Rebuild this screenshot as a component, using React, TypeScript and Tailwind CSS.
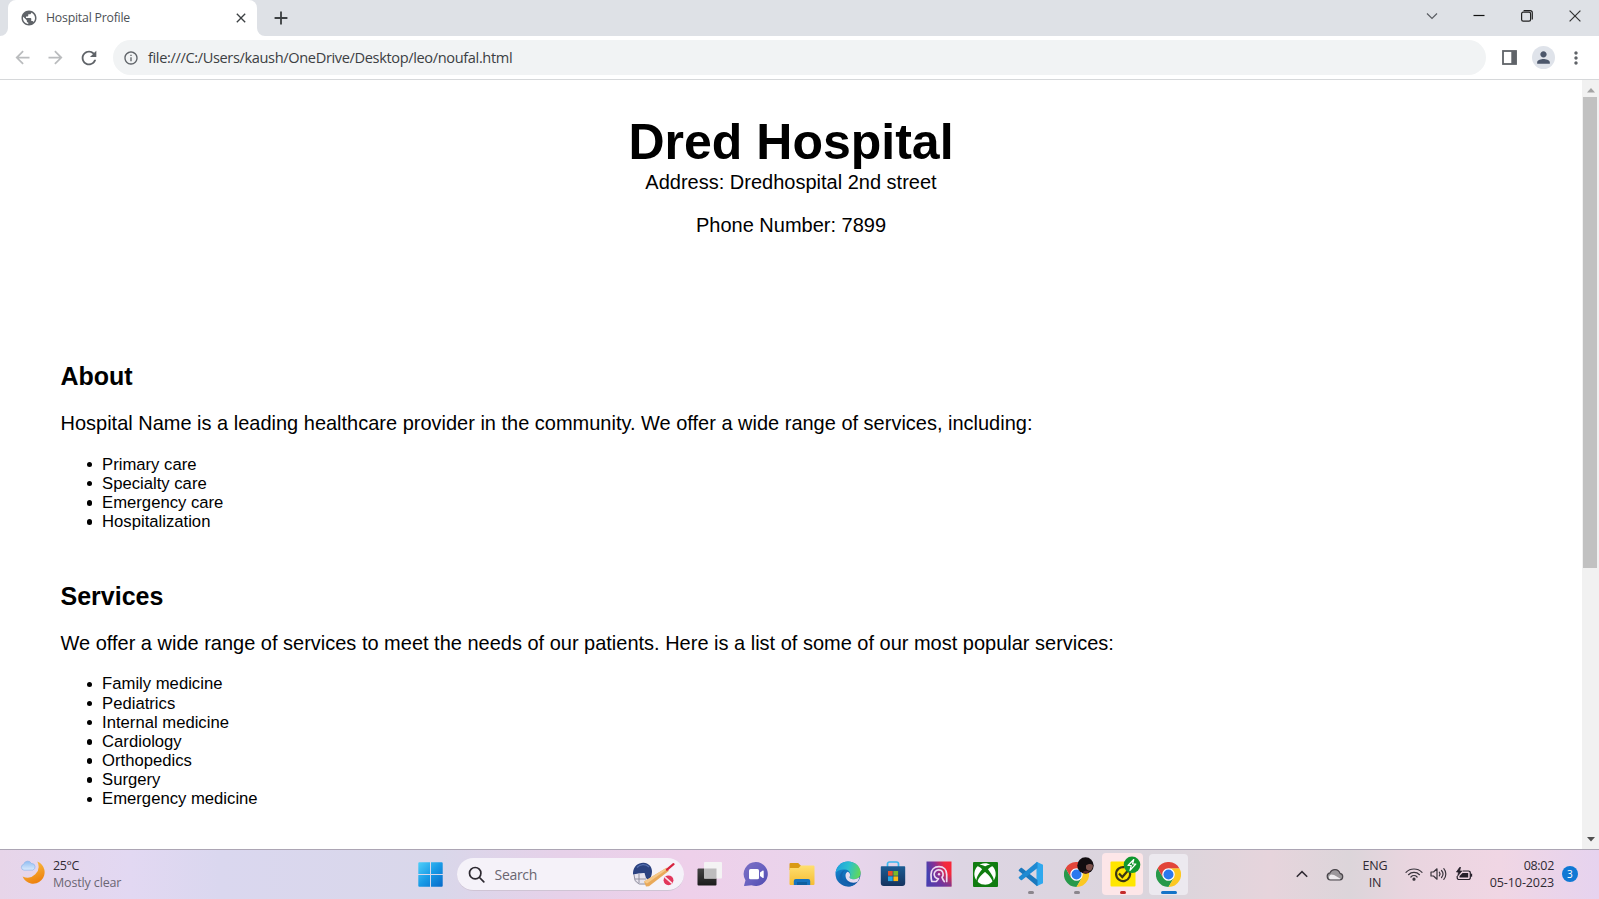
import React from 'react';
import {
  MdAdd,
  MdArrowBack,
  MdArrowForward,
  MdClose,
  MdInfoOutline,
  MdMoreVert,
  MdPerson,
  MdPublic,
  MdRefresh,
} from 'react-icons/md';
import { FaXbox } from 'react-icons/fa';

const careTypes = ['Primary care', 'Specialty care', 'Emergency care', 'Hospitalization'];

const services = [
  'Family medicine',
  'Pediatrics',
  'Internal medicine',
  'Cardiology',
  'Orthopedics',
  'Surgery',
  'Emergency medicine',
];

function TabStrip() {
  return (
    <div className="flex h-9 w-full items-stretch bg-[#dee1e6]">
      <svg width="8" height="36" viewBox="0 0 8 36" className="shrink-0">
        <path d="M8 28v8H0a8 8 0 0 0 8-8z" fill="#fff" />
      </svg>
      <div className="flex w-[249px] items-center rounded-t-lg bg-white pl-[12px]">
        <MdPublic className="h-[18px] w-[18px] shrink-0 text-[#5f6368]" />
        <span className="ml-[8px] flex-1 whitespace-nowrap text-[12.3px] tracking-[-0.22px] text-[#4d5156]">
          Hospital Profile
        </span>
        <MdClose className="mr-[8px] h-4 w-4 text-[#3c4043]" />
      </div>
      <svg width="8" height="36" viewBox="0 0 8 36" className="shrink-0">
        <path d="M0 28v8h8a8 8 0 0 1-8-8z" fill="#fff" />
      </svg>
      <div className="flex w-8 items-center justify-center">
        <MdAdd className="h-[22px] w-[22px] text-[#3c4043]" />
      </div>
      <div className="ml-auto flex h-8 items-center">
        <div className="flex w-[47px] justify-center">
          <svg width="12" height="12" viewBox="0 0 12 12" fill="none" stroke="#5a5d62" strokeWidth="1.2">
            <path d="M1 3.5l5 5 5-5" />
          </svg>
        </div>
        <div className="flex w-[48px] justify-center">
          <svg width="12" height="12" viewBox="0 0 12 12" stroke="#111" strokeWidth="1.2">
            <path d="M0.5 5.5h11" />
          </svg>
        </div>
        <div className="flex w-[48px] justify-center">
          <svg width="12" height="12" viewBox="0 0 12 12" fill="none" stroke="#222" strokeWidth="1.2">
            <rect x="0.6" y="2.1" width="9" height="9" rx="1.6" />
            <path d="M2.6 0.7h6.6a2.1 2.1 0 0 1 2.1 2.1v6.6" />
          </svg>
        </div>
        <div className="flex w-[48px] justify-center">
          <svg width="12" height="12" viewBox="0 0 12 12" stroke="#333" strokeWidth="1.2">
            <path d="M0.6 0.6l10.8 10.8M11.4 0.6L0.6 11.4" />
          </svg>
        </div>
      </div>
    </div>
  );
}

function Toolbar() {
  return (
    <div className="flex h-11 w-full items-center border-b border-[#d6d8da] bg-white">
      <div className="flex w-[113px] items-center gap-[12px] pl-[12px]">
        <MdArrowBack className="h-[21px] w-[21px] text-[#babcbe]" />
        <MdArrowForward className="h-[21px] w-[21px] text-[#babcbe]" />
        <MdRefresh className="h-[22px] w-[22px] text-[#5f6368]" />
      </div>
      <div className="flex h-[35px] w-[1373px] items-center rounded-full bg-[#f1f3f4] pl-[10px]">
        <MdInfoOutline className="h-4 w-4 text-[#5f6368]" />
        <span className="ml-[9px] whitespace-nowrap text-[14.6px] tracking-[-0.37px] text-[#3c4043]">
          file:///C:/Users/kaush/OneDrive/Desktop/leo/noufal.html
        </span>
      </div>
      <svg width="15" height="15" viewBox="0 0 15 15" className="ml-[16px]">
        <rect x="1" y="1" width="13" height="13" fill="none" stroke="#5f6368" strokeWidth="1.8" />
        <rect x="9.3" y="1" width="5" height="13" fill="#5f6368" />
      </svg>
      <div className="ml-[15px] flex h-[23px] w-[23px] items-center justify-center rounded-full bg-[#dfe3ea]">
        <MdPerson className="h-[19px] w-[19px] text-[#4c576b]" />
      </div>
      <MdMoreVert className="ml-[11px] h-5 w-5 text-[#5f6368]" />
    </div>
  );
}

function BulletList({ items }: { items: string[] }) {
  return (
    <ul className="mt-[19.6px] pl-[26.3px] text-[16.66px] leading-[19.13px]">
      {items.map((item) => (
        <li
          key={item}
          className="flex items-center before:mr-[9.9px] before:mt-px before:h-[5.4px] before:w-[5.4px] before:rounded-full before:bg-black before:content-['']"
        >
          {item}
        </li>
      ))}
    </ul>
  );
}

function Section({ title, text, items }: { title: string; text: string; items: string[] }) {
  return (
    <section>
      <h2 className="text-[25px] font-bold leading-[29px]">{title}</h2>
      <p className="mt-[21px] whitespace-nowrap text-[19.99px] leading-[23px]">{text}</p>
      <BulletList items={items} />
    </section>
  );
}

function Page() {
  return (
    <main className="h-full flex-1 overflow-hidden bg-white font-['Liberation_Sans',Arial,sans-serif] text-black">
      <header className="flex flex-col items-center pt-[34px] text-center">
        <h1 className="text-[50px] font-bold leading-[57px]">Dred Hospital</h1>
        <p className="text-[20px] leading-[23px]">Address: Dredhospital 2nd street</p>
        <p className="mt-[20px] text-[20px] leading-[23px]">Phone Number: 7899</p>
      </header>
      <div className="flex flex-col gap-[50.8px] pl-[60.5px] pt-[125px]">
        <Section
          title="About"
          text="Hospital Name is a leading healthcare provider in the community. We offer a wide range of services, including:"
          items={careTypes}
        />
        <Section
          title="Services"
          text="We offer a wide range of services to meet the needs of our patients. Here is a list of some of our most popular services:"
          items={services}
        />
      </div>
    </main>
  );
}

function Scrollbar() {
  return (
    <div className="flex h-full w-[17px] flex-col items-center bg-[#f1f1f1]">
      <div className="flex h-[17px] items-center justify-center pt-[3px]">
        <svg width="8" height="5" viewBox="0 0 8 5">
          <path d="M4 0l4 4.5H0z" fill="#a3a3a3" />
        </svg>
      </div>
      <div className="mr-px h-[471px] w-[14px] bg-[#c1c1c1]" />
      <div className="mt-auto flex h-[20px] items-center justify-center">
        <svg width="8" height="5" viewBox="0 0 8 5">
          <path d="M4 4.5L0 0h8z" fill="#505050" />
        </svg>
      </div>
    </div>
  );
}

function WeatherIcon() {
  return (
    <svg width="25" height="25" viewBox="0 0 25 25" className="-mt-[3px]">
      <defs>
        <linearGradient id="moon" x1="0" y1="0" x2="0.4" y2="1">
          <stop offset="0" stopColor="#fcc74a" />
          <stop offset="1" stopColor="#ee8410" />
        </linearGradient>
        <linearGradient id="cloud" x1="0" y1="0" x2="0" y2="1">
          <stop offset="0" stopColor="#8fbdf2" />
          <stop offset="1" stopColor="#dcebfd" />
        </linearGradient>
      </defs>
      <path d="M17.3 1.6A11.4 11.4 0 1 1 2.6 16.4 11 11 0 0 0 17.3 1.6z" fill="url(#moon)" />
      <path
        d="M4 10.2a3 3 0 0 1-.3-5.9 4.1 4.1 0 0 1 7.7-.8 3.4 3.4 0 0 1 1.4 6.6z"
        fill="url(#cloud)"
        stroke="#8db4ea"
        strokeWidth="0.7"
      />
    </svg>
  );
}

function StartIcon() {
  return (
    <svg width="25" height="25" viewBox="0 0 25 25">
      <defs>
        <linearGradient id="start" gradientUnits="userSpaceOnUse" x1="0" y1="0" x2="25" y2="25">
          <stop offset="0" stopColor="#4fd0fa" />
          <stop offset="0.5" stopColor="#189ae6" />
          <stop offset="1" stopColor="#0668c8" />
        </linearGradient>
      </defs>
      <path
        d="M1.3 0.3H12v11.7H0.3V1.3a1 1 0 0 1 1-1zM13 0.3h10.7a1 1 0 0 1 1 1V12H13zM0.3 13H12v11.7H1.3a1 1 0 0 1-1-1zM13 13h11.7v10.7a1 1 0 0 1-1 1H13z"
        fill="url(#start)"
      />
    </svg>
  );
}

function CricketIcon() {
  return (
    <svg width="43" height="26" viewBox="0 0 43 26">
      <path d="M2 13c-1 4 0 8 4 10l6 1 5-3 2-8z" fill="#e7e4ee" />
      <path d="M2 13.5l1 6 4 3.5 7 0M3 18h11M7 13v9" fill="none" stroke="#8b8a9a" strokeWidth="0.9" />
      <path
        d="M1 11.8C1.5 5 6 1.6 11.5 1.7c5 0.2 8.8 4 8.5 9.3-0.2 3.5-1.5 6.5-3.3 8.3L14 17l-1.5-5-6 0.4-5.5 1.2z"
        fill="#2b4280"
      />
      <path d="M5 6.5c3-3.5 8.5-4 12-0.5" fill="none" stroke="#5570b0" strokeWidth="1.2" />
      <path d="M12 20.5L34.5 6.7l2.5 3L17 25.2l-3 0.3z" fill="#e9a95a" />
      <path d="M12 20.5L34.5 6.7l1 1.3L15 22.5z" fill="#f6c98a" />
      <path d="M35 8.7l6.500-5.500" stroke="#d6243f" strokeWidth="2.2" strokeLinecap="round" />
      <circle cx="36.5" cy="19.3" r="4.9" fill="#e2365b" />
      <path d="M33 16.2l7 6.2" stroke="#fbe4ea" strokeWidth="1.6" />
    </svg>
  );
}

function TaskViewIcon() {
  return (
    <svg width="26" height="26" viewBox="0 0 26 26">
      <defs>
        <linearGradient id="tv" x1="0" y1="0" x2="0" y2="1">
          <stop offset="0" stopColor="#444" />
          <stop offset="1" stopColor="#1b1b1b" />
        </linearGradient>
      </defs>
      <rect x="0.5" y="7.5" width="19" height="17" rx="1" fill="url(#tv)" />
      <rect x="7" y="1" width="18" height="16.5" rx="1" fill="#f4f3f4" />
      <rect x="7" y="7.5" width="12.5" height="10" fill="#bdbcbd" />
    </svg>
  );
}

function ChatIcon() {
  return (
    <svg width="26" height="26" viewBox="0 0 26 26">
      <defs>
        <linearGradient id="chat" x1="0" y1="0" x2="1" y2="1">
          <stop offset="0" stopColor="#7b6fc4" />
          <stop offset="0.5" stopColor="#6a62c0" />
          <stop offset="1" stopColor="#4f4bb0" />
        </linearGradient>
      </defs>
      <path
        d="M13 1a12 12 0 1 1-4.5 23.2L1.8 25c-0.7 0-0.9-0.5-0.6-1.1l1.3-4.6A12 12 0 0 1 13 1z"
        fill="url(#chat)"
      />
      <rect x="6" y="8" width="10" height="10.3" rx="1.6" fill="#fff" />
      <path d="M17 11.5l2.8-2c0.4-0.3 0.9 0 0.9 0.5v6.4c0 0.5-0.5 0.8-0.9 0.5l-2.8-2z" fill="#fff" />
    </svg>
  );
}

function FolderIcon() {
  return (
    <svg width="26" height="26" viewBox="0 0 26 26">
      <defs>
        <linearGradient id="folder" x1="0" y1="0" x2="0" y2="1">
          <stop offset="0" stopColor="#ffdf70" />
          <stop offset="1" stopColor="#f6bd33" />
        </linearGradient>
      </defs>
      <path d="M1.5 2h7.7l2.4 2.5H12V9H0.5V3a1 1 0 0 1 1-1z" fill="#d99a15" />
      <path d="M0.5 7h9l2.5-2.5h12.5a1 1 0 0 1 1 1V23a1 1 0 0 1-1 1h-23a1 1 0 0 1-1-1z" fill="url(#folder)" />
      <path d="M4.8 24v-4a2 2 0 0 1 2-2h12.4a2 2 0 0 1 2 2v4z" fill="#1673c0" />
      <path d="M8 21h10v3H8z" fill="#0f5f9f" />
    </svg>
  );
}

function EdgeIcon() {
  return (
    <svg width="26" height="26" viewBox="0 0 26 26">
      <defs>
        <linearGradient id="edgeTop" x1="0" y1="0.3" x2="1" y2="0.5">
          <stop offset="0" stopColor="#1f9ede" />
          <stop offset="0.5" stopColor="#2cc0cf" />
          <stop offset="1" stopColor="#62d858" />
        </linearGradient>
        <linearGradient id="edgeLow" x1="0" y1="0" x2="0.7" y2="1">
          <stop offset="0" stopColor="#1793dc" />
          <stop offset="1" stopColor="#0f4e9c" />
        </linearGradient>
      </defs>
      <circle cx="13" cy="13" r="12.5" fill="url(#edgeLow)" />
      <path
        d="M0.6 12C1.3 5.2 6.5 0.5 13 0.5c7.5 0 12.6 5.3 12.6 11 0 4-2.6 6.7-6.6 6.7-3.4 0-5-1.4-4.3-2.5 1.5-2.3 0.5-6.7-4.7-7.2C6 8 2 9.5 0.6 12z"
        fill="url(#edgeTop)"
      />
      <path
        d="M14.7 15.7c-0.7 1.2 0.9 2.5 4.3 2.5 2.4 0 4.3-0.9 5.5-2.4-0.3 2-1 3.6-2 5-5.5 2.5-12-0.5-12-6.3 0-1.7 0.8-3 2-3.7 2.5 0.7 3.2 3.2 2.2 4.9z"
        fill="#e6dcef"
      />
      <path
        d="M10.3 9c-3.5 2.6-4 7.2-1.5 10.5 2.5 3.3 7.5 4.5 12.8 2.5-5 5.5-13 4-16-1.500C3.2 16 5.5 10.2 10.3 9z"
        fill="#1463ae"
      />
    </svg>
  );
}

function StoreIcon() {
  return (
    <svg width="26" height="26" viewBox="0 0 26 26">
      <defs>
        <linearGradient id="store" x1="0" y1="0" x2="0" y2="1">
          <stop offset="0" stopColor="#1b5c93" />
          <stop offset="1" stopColor="#15335f" />
        </linearGradient>
      </defs>
      <path d="M7.5 6V3a2 2 0 0 1 2-2h7a2 2 0 0 1 2 2v3" fill="none" stroke="#3bb7ee" strokeWidth="1.7" />
      <path d="M0.8 6.3c0-0.6 0.4-1 1-1h22.4c0.6 0 1 0.4 1 1V22a3 3 0 0 1-3 3H3.8a3 3 0 0 1-3-3z" fill="url(#store)" />
      <rect x="8" y="10" width="4.7" height="4.7" fill="#e8502a" />
      <rect x="13.4" y="10" width="4.7" height="4.7" fill="#7cb928" />
      <rect x="8" y="15.4" width="4.7" height="4.7" fill="#26a6e6" />
      <rect x="13.4" y="15.4" width="4.7" height="4.7" fill="#fdbb13" />
    </svg>
  );
}

function ArchIcon() {
  return (
    <svg width="26" height="26" viewBox="0 0 26 26">
      <defs>
        <linearGradient id="arch" x1="0" y1="0.6" x2="1" y2="0.3">
          <stop offset="0" stopColor="#3445b8" />
          <stop offset="0.45" stopColor="#8b2f92" />
          <stop offset="0.8" stopColor="#f32a3e" />
          <stop offset="1" stopColor="#f7283a" />
        </linearGradient>
        <linearGradient id="archShade" x1="0" y1="0" x2="0" y2="1">
          <stop offset="0.5" stopColor="#5c3aa8" stopOpacity="0" />
          <stop offset="1" stopColor="#5c3aa8" stopOpacity="0.8" />
        </linearGradient>
      </defs>
      <rect x="0.5" y="0.5" width="25" height="25" fill="url(#arch)" />
      <rect x="0.5" y="0.5" width="25" height="25" fill="url(#archShade)" />
      <g fill="none" stroke="#ecdcf2" strokeWidth="1.7" strokeLinecap="round" strokeLinejoin="round">
        <path d="M9.500 20.500H5.800C5.200 18.500 5 16 5 13.500 5 8.800 8.300 5.700 13 5.700s7.700 3.100 7.700 7.800V20.500" />
        <path d="M10.500 20.300l2-2.500a4.500 4.500 0 1 1 3.500-1.500c0.500 1.700 1.300 3 2.300 4.200" />
      </g>
      <circle cx="13" cy="13.200" r="1.200" fill="#ecdcf2" />
    </svg>
  );
}

function XboxIcon() {
  return (
    <div className="flex h-[25px] w-[25px] items-center justify-center rounded-[1px] bg-[#107c10]">
      <FaXbox className="h-[22px] w-[22px] text-white" />
    </div>
  );
}

function CodeIcon() {
  return (
    <svg width="26" height="26" viewBox="0 0 26 26">
      <path d="M18.5 0.8L25 3.8v18.4l-6.5 3z" fill="#2fa8ee" />
      <path
        d="M0.9 8.7L2.7 7c0.4-0.3 0.9-0.3 1.3 0L19.5 19v6l-1-0.2L0.9 9.9c-0.4-0.4-0.4-0.9 0-1.2z"
        fill="#1a78bd"
      />
      <path
        d="M0.9 17.3L2.7 19c0.4 0.3 0.9 0.3 1.3 0L19.5 7V1l-1 0.2L0.9 16.1c-0.4 0.4-0.4 0.9 0 1.2z"
        fill="#1f8ad2"
      />
    </svg>
  );
}

function ChromeIcon({ size }: { size: number }) {
  return (
    <svg width={size} height={size} viewBox="0 0 48 48">
      <circle cx="24" cy="24" r="12" fill="#fff" />
      <path d="M13.6 30L3.2 12A24 24 0 0 0 24 48l10.4-18A12 12 0 0 1 13.6 30z" fill="#27994a" />
      <path d="M34.4 30L24 48a24 24 0 0 0 20.8-36H24a12 12 0 0 1 10.4 18z" fill="#fcc822" />
      <path d="M24 12h20.8a24 24 0 0 0-41.6 0l10.4 18A12 12 0 0 1 24 12z" fill="#e2453a" />
      <circle cx="24" cy="24" r="9.6" fill="#2b78ee" />
    </svg>
  );
}

function ProfileBadge() {
  return (
    <svg width="17" height="17" viewBox="0 0 17 17" className="absolute -right-[5px] -top-[5px]">
      <circle cx="8.5" cy="8.5" r="8.2" fill="#120d10" />
      <path d="M9 8.5c2-1.5 4.5-2 6.800-0.500 0.400 2.300-0.700 4.500-2.500 5.700-2.200 0.300-3.800-0.800-4.300-2.500z" fill="#7d524c" />
      <path d="M6 15c1.5-1.5 4.5-1.7 6.5-0.2l-1.5 1.3c-1.5 0.5-3.5 0.4-5-0.6z" fill="#57242c" />
    </svg>
  );
}

function CheckShieldIcon() {
  return (
    <svg width="31" height="31" viewBox="0 0 31 31" className="absolute left-[8px] top-[3px]">
      <rect x="0.5" y="5.5" width="25" height="25" rx="1" fill="#ffe600" />
      <path d="M19.3 14.8A7 7 0 1 1 14.5 11.2" fill="none" stroke="#3b3614" strokeWidth="2.2" />
      <path d="M9 17.5l3.3 3.5 7-8" fill="none" stroke="#3b3614" strokeWidth="2.2" />
      <circle cx="22" cy="8.8" r="8.3" fill="#12972f" />
      <path
        d="M23.8 3.5l-5.8 6h3.3l-1.3 4.8 5.8-6.3h-3.3z"
        fill="none"
        stroke="#fff"
        strokeWidth="1.2"
        strokeLinejoin="round"
      />
    </svg>
  );
}

function AppCell({ children, indicator }: { children: React.ReactNode; indicator?: string }) {
  return (
    <div className="relative flex h-full w-[45.86px] items-center justify-center pb-px">
      {children}
      {indicator ? <span className={`absolute bottom-[5px] h-[3px] rounded-full ${indicator}`} /> : null}
    </div>
  );
}

function SystemTray() {
  return (
    <div className="ml-auto flex h-full items-center pb-px text-[#2f2a33]">
      <div className="flex w-6 justify-center">
        <svg width="12" height="8" viewBox="0 0 12 8" fill="none" stroke="#2f2a33" strokeWidth="1.5">
          <path d="M0.8 6.8L6 1.6l5.2 5.2" />
        </svg>
      </div>
      <div className="flex w-[42px] justify-center">
        <svg width="18" height="13" viewBox="0 0 18 13">
          <path
            d="M4.5 12a3.6 3.6 0 0 1-0.5-7.1A5.3 5.3 0 0 1 14 5.3a3.4 3.4 0 0 1-0.2 6.7z"
            fill="#9b989b"
            stroke="#49454a"
            strokeWidth="1.2"
          />
          <path d="M3.6 11.2a3 3 0 0 1 1.5-4.7l3 0.5 6.4 3.7c-0.5 0.5-1 0.6-1.5 0.6z" fill="#eeecee" />
        </svg>
      </div>
      <div className="flex w-[38px] flex-col items-center pt-px text-[12.5px] leading-[16.5px] tracking-[-0.2px]">
        <span>ENG</span>
        <span>IN</span>
      </div>
      <div className="ml-[7px] flex w-[25px] justify-center">
        <svg width="18" height="14" viewBox="0 0 18 14" fill="none" stroke="#3a353d" strokeWidth="1.2" strokeLinecap="round">
          <path d="M1 5.3a11.3 11.3 0 0 1 16 0" />
          <path d="M3.5 7.7a7.8 7.8 0 0 1 11 0" />
          <path d="M5.9 10a4.4 4.4 0 0 1 6.2 0" />
          <circle cx="9" cy="12.2" r="1" fill="#3a353d" />
        </svg>
      </div>
      <div className="flex w-[25px] justify-center">
        <svg
          width="18"
          height="14"
          viewBox="0 0 18 14"
          fill="none"
          stroke="#3a353d"
          strokeWidth="1.2"
          strokeLinecap="round"
          strokeLinejoin="round"
        >
          <path d="M1 5h2.5L7 1.8v10.4L3.5 9H1z" />
          <path d="M9.3 5.2a2.8 2.8 0 0 1 0 3.6" />
          <path d="M11.5 3.5a5.3 5.3 0 0 1 0 7" />
          <path d="M13.8 1.7a8 8 0 0 1 0 10.6" />
        </svg>
      </div>
      <div className="flex w-[25px] justify-center">
        <svg width="18" height="15" viewBox="0 0 18 15" fill="none" stroke="#25202a" strokeWidth="1.2">
          <path d="M7.5 4h6a1.8 1.8 0 0 1 1.8 1.8v4.9a1.8 1.8 0 0 1-1.8 1.8H4a1.8 1.8 0 0 1-1.8-1.8V9" />
          <path d="M4.5 10.5V9L7.5 6h5.7v4.5z" fill="#25202a" stroke="none" />
          <path d="M16.4 6.7v3" strokeWidth="1.5" />
          <path d="M4.800 0.300L1.500 5h2.200L2.800 8.800 6.800 4H4.500L5.500 0.300z" fill="#25202a" strokeWidth="0.8" />
        </svg>
      </div>
      <div className="ml-px flex w-[77px] flex-col items-end whitespace-nowrap pt-px text-[12.5px] leading-[16.5px] tracking-[-0.3px]">
        <span>08:02</span>
        <span className="tracking-[-0.1px]">05-10-2023</span>
      </div>
      <div className="ml-[7.5px] mr-[21px] flex h-[16.5px] w-[16.5px] items-center justify-center rounded-full bg-[#0f78d4] text-[10px] leading-none text-white">
        3
      </div>
    </div>
  );
}

function Taskbar() {
  return (
    <footer className="flex h-[50px] w-full items-center border-t border-[#aca5b4] bg-[linear-gradient(90deg,#e7d5e9_0px,#e2d8f2_130px,#dad7ef_220px,#d9d7ea_440px,#e6d1e9_560px,#eed0ea_690px,#e8d5ec_850px,#ddd5e3_960px,#dbd5dc_1170px,#e6d4dc_1270px,#dcd5da_1350px,#e9d5df_1410px,#f0d6e4_1500px,#e6d3ef_1599px)]">
      <div className="flex w-[407px] items-center pb-[2px] pl-[20px]">
        <WeatherIcon />
        <div className="ml-[8px] flex flex-col whitespace-nowrap text-[12.5px] leading-[17px]">
          <span className="tracking-[-0.4px] text-[#2f2a33]">25°C</span>
          <span className="tracking-[-0.15px] text-[#6b6673]">Mostly clear</span>
        </div>
      </div>
      <div className="flex w-[46px] justify-center pb-px">
        <StartIcon />
      </div>
      <div className="ml-1 mr-[3px] flex h-[33px] w-[227px] items-center rounded-full border-b border-[#cfc4d4] bg-[#f5f2f9] pl-[11px]">
        <svg width="17" height="17" viewBox="0 0 17 17" fill="none" stroke="#2c2830" strokeWidth="1.7" strokeLinecap="round">
          <circle cx="7.2" cy="7.2" r="5.7" />
          <path d="M11.5 11.5l4.3 4.3" />
        </svg>
        <span className="ml-[9.5px] flex-1 text-[14px] tracking-[-0.3px] text-[#6a6670]">Search</span>
        <div className="mr-[9px]">
          <CricketIcon />
        </div>
      </div>
      <AppCell>
        <TaskViewIcon />
      </AppCell>
      <AppCell>
        <ChatIcon />
      </AppCell>
      <AppCell>
        <FolderIcon />
      </AppCell>
      <AppCell>
        <EdgeIcon />
      </AppCell>
      <AppCell>
        <StoreIcon />
      </AppCell>
      <AppCell>
        <ArchIcon />
      </AppCell>
      <AppCell>
        <XboxIcon />
      </AppCell>
      <AppCell indicator="w-[6px] bg-[#8b868d]">
        <CodeIcon />
      </AppCell>
      <AppCell indicator="w-[6px] bg-[#8b868d]">
        <div className="relative">
          <ChromeIcon size={25} />
          <ProfileBadge />
        </div>
      </AppCell>
      <AppCell indicator="w-[6px] bg-[#c42b2b]">
        <div className="relative h-[42px] w-[41px] rounded-[4px] bg-[#fde6e8]">
          <CheckShieldIcon />
        </div>
      </AppCell>
      <AppCell indicator="w-4 bg-[#1474c8]">
        <div className="flex h-[41px] w-[39px] items-center justify-center rounded-[4px] bg-[#ece9ef]">
          <ChromeIcon size={25} />
        </div>
      </AppCell>
      <SystemTray />
    </footer>
  );
}

export default function App() {
  return (
    <div className="flex h-[899px] w-[1599px] flex-col overflow-hidden bg-white font-['Open_Sans','Noto_Sans',sans-serif]">
      <TabStrip />
      <Toolbar />
      <div className="flex h-[769px] w-full">
        <Page />
        <Scrollbar />
      </div>
      <Taskbar />
    </div>
  );
}
